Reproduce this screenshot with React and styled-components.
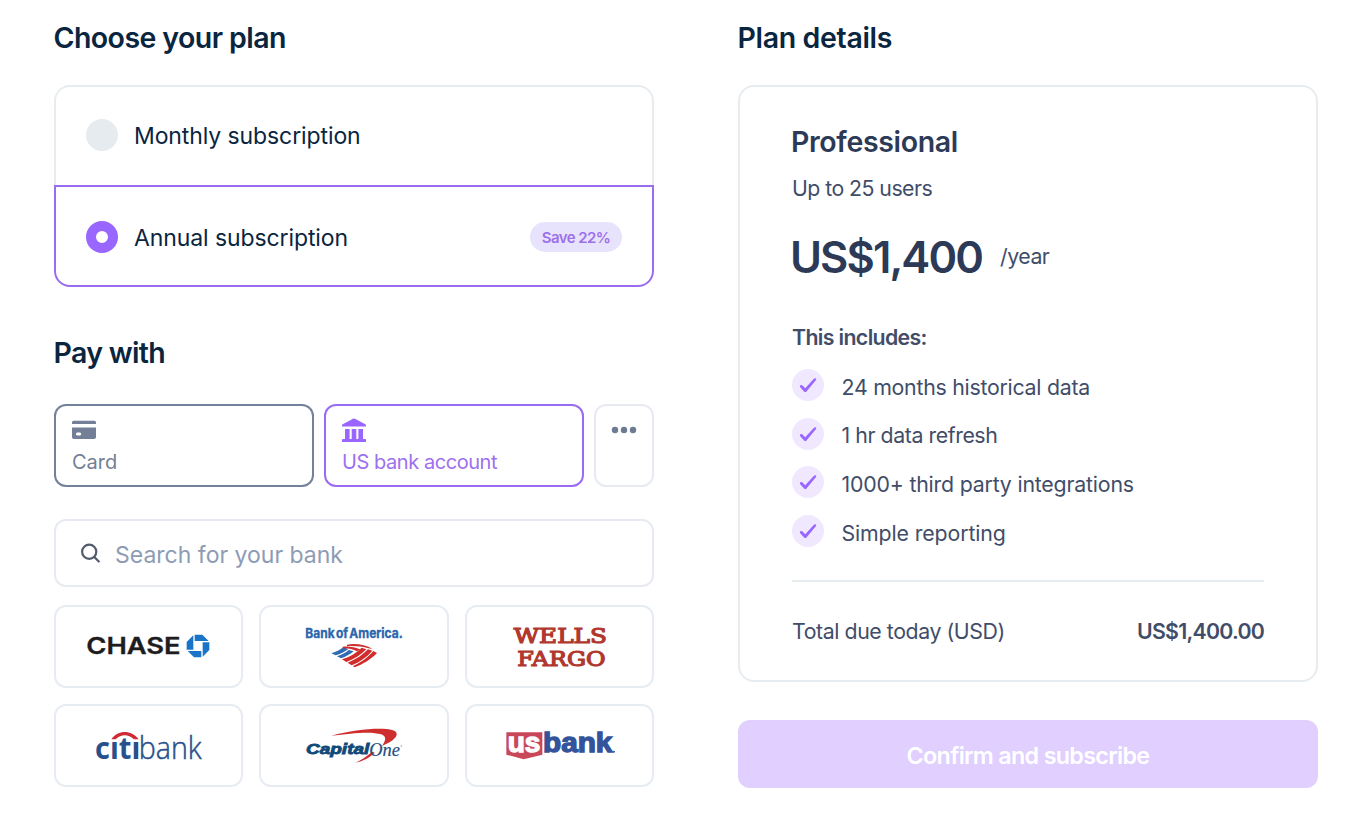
import React from "react";
import styled, { createGlobalStyle, css } from "styled-components";

const GlobalStyle = createGlobalStyle`
  *, *::before, *::after { box-sizing: border-box; }
  body {
    margin: 0;
    background: #fff;
    font-family: Inter, "Liberation Sans", sans-serif;
    font-weight: 400;
    color: #0a2540;
  }
  h1, h2, h3, p, ul { margin: 0; padding: 0; }
  svg { display: block; }
`;

const Page = styled.main`
  display: grid;
  grid-template-columns: 600px 580px;
  column-gap: 84px;
  align-items: start;
  padding: 20px 44px 39px 54px;
`;

const Column = styled.section`
  display: flex;
  flex-direction: column;
`;

const Heading = styled.h2`
  height: 36px;
  line-height: 36px;
  font-size: 28.5px;
  font-weight: 600;
  letter-spacing: ${(p) => p.$track || "-0.57px"};
  white-space: nowrap;
  margin: ${(p) => p.$top || 0}px 0 ${(p) => p.$bottom}px -0.5px;
`;

const PlanOption = styled.label`
  display: flex;
  align-items: center;
  padding: 0 30px;
  border: 2px solid #e7ecf0;
  ${(p) =>
    p.$selected
      ? css`
          height: 102px;
          padding-top: 2px;
          border-color: #9a6cf0;
          border-radius: 0 0 16px 16px;
        `
      : css`
          height: 100px;
          padding-bottom: 2px;
          border-bottom: 0;
          border-radius: 16px 16px 0 0;
        `}
`;

const Radio = styled.span`
  width: 32px;
  height: 32px;
  margin-right: 16px;
  border-radius: 50%;
  background: ${(p) => (p.$selected ? "#fff" : "#e6ebef")};
  border: ${(p) => (p.$selected ? "10px solid #9966ff" : "0")};
`;

const PlanName = styled.span`
  flex: 1;
  font-size: 23px;
  line-height: 30px;
  letter-spacing: ${(p) => p.$track || "-0.1px"};
  margin-top: 2px;
`;

const Badge = styled.span`
  width: 92px;
  height: 30px;
  line-height: 31px;
  border-radius: 15px;
  background: #e8e3fd;
  color: #9d70ea;
  font-size: 15px;
  font-weight: 600;
  letter-spacing: -0.55px;
  text-align: center;
`;

const Methods = styled.div`
  display: grid;
  grid-template-columns: 260px 260px 60px;
  column-gap: 10px;
`;

const tones = {
  grey: ["#74819a", "#727f96"],
  purple: ["#9a6cf4", "#9d70ee"],
  faint: ["#e7ebf1", "#6c7a92"],
};

const Method = styled.button`
  display: flex;
  flex-direction: column;
  align-items: ${(p) => (p.$tone === "faint" ? "center" : "flex-start")};
  height: 83px;
  padding: 12px 16px 0;
  background: #fff;
  border: 2px solid ${(p) => tones[p.$tone][0]};
  border-radius: 12px;
  color: ${(p) => tones[p.$tone][1]};
  font: 400 20px/24px Inter, sans-serif;
  letter-spacing: ${(p) => p.$track || "0"};
`;

const MethodLabel = styled.span`
  margin-top: 8px;
`;

const SearchBox = styled.div`
  display: flex;
  align-items: center;
  height: 68px;
  margin: 32px 0 18px;
  padding: 0 24px;
  border: 2px solid #e7ebf1;
  border-radius: 12px;
`;

const SearchInput = styled.span`
  margin: 3px 0 0 13px;
  font-size: 23px;
  line-height: 30px;
  color: #8d9bb4;
`;

const BankGrid = styled.div`
  display: grid;
  grid-template-columns: repeat(3, 1fr);
  gap: 16px;
`;

const BankTile = styled.button`
  height: 83px;
  padding: 0;
  background: #fff;
  border: 2px solid #e7ecf3;
  border-radius: 12px;
`;

const Logo = styled.svg`
  width: 100%;
  height: 79px;
`;

const Details = styled.article`
  height: 597px;
  padding: 37px 52px 0;
  border: 2px solid #e7ecf0;
  border-radius: 16px;
  color: #414d68;
`;

const PlanTitle = styled.h3`
  margin-left: -1px;
  font-size: 28.5px;
  line-height: 36px;
  font-weight: 600;
  letter-spacing: -0.35px;
  color: #2d3a57;
`;

const Line = styled.p`
  font-size: 21.3px;
  line-height: 28px;
  letter-spacing: ${(p) => p.$track};
  font-weight: ${(p) => (p.$strong ? 600 : 400)};
  margin-top: ${(p) => p.$top || 0}px;
  white-space: nowrap;
`;

const PriceRow = styled.div`
  display: flex;
  align-items: center;
  gap: 18px;
  margin-top: 29px;
`;

const Price = styled.strong`
  margin-left: -2px;
  font-size: 43.5px;
  line-height: 52px;
  font-weight: 600;
  letter-spacing: -1.9px;
  color: #2d3a57;
`;

const PricePeriod = styled(Line)`
  margin-bottom: 2px;
`;

const Features = styled.ul`
  display: flex;
  flex-direction: column;
  gap: 16.7px;
  margin-top: 18px;
  list-style: none;
`;

const Feature = styled.li`
  display: flex;
  align-items: center;
  gap: 17.5px;
  height: 32px;
`;

const Check = styled.span`
  display: grid;
  place-items: center;
  width: 32px;
  height: 32px;
  border-radius: 50%;
  background: #f0e8ff;
`;

const Total = styled.div`
  display: flex;
  justify-content: space-between;
  margin-top: 33px;
  padding-top: 35px;
  border-top: 2px solid #e6edf0;
`;

const Confirm = styled.button`
  height: 68px;
  margin-top: 38px;
  padding: 4px 0 0;
  border: 0;
  border-radius: 12px;
  background: #e0cfff;
  color: #fff;
  font: 600 23.3px/30px Inter, sans-serif;
  letter-spacing: -0.68px;
`;

const CardIcon = () => (
  <svg width="24" height="24" viewBox="0 0 24 24" fill="currentColor">
    <path d="M0 5.900V4.400C0 3.300.8 2.700 2 2.700h20c1.200 0 2 .6 2 1.700v1.500z" />
    <path fillRule="evenodd" d="M0 9.500h24v9.400c0 1.200-.8 2-2 2H2c-1.200 0-2-.8-2-2zM5.300 14.500c-1.700 0-1.700 3 0 3h2.600c1.700 0 1.700-3 0-3z" />
  </svg>
);

const BankIcon = () => (
  <svg width="24" height="24" viewBox="0 0 24 24" fill="#9966ff">
    <path d="M11 .7a2 2 0 0 1 2 0l10.300 5.500c.5.300.7.700.7 1.200v1.100H0V7.400c0-.5.200-.9.700-1.200z" />
    <path d="M3 11h4.600v10H3zM9.700 11h4.600v10H9.700zM16.400 11H21v10h-4.600z" />
    <path d="M1 20.900h22c.6 0 1 .4 1 1V24H0v-2.100c0-.6.400-1 1-1z" />
  </svg>
);

const DotsIcon = () => (
  <svg width="26" height="24" viewBox="-1 0 26 24" fill="currentColor">
    <circle cx="3" cy="12" r="3.200" />
    <circle cx="12" cy="12" r="3.200" />
    <circle cx="21" cy="12" r="3.200" />
  </svg>
);

const SearchIcon = () => (
  <svg width="22" height="22" viewBox="0 0 22 22" fill="none" stroke="#535b6e" strokeWidth="2.200">
    <circle cx="9.200" cy="9.800" r="7.100" />
    <path d="M14.300 14.900l4.500 4.600" strokeLinecap="round" />
  </svg>
);

const CheckIcon = () => (
  <svg width="18" height="16" viewBox="0 0 18 16" fill="#9966ff">
    <path d="M1.400 8.300c.8-.5 1.800-.2 2.400.500l2.400 2.500L14.700 2c.6-.6 1.600-.9 2.200-.3.500.4.300 1-.1 1.500L7.500 14.500c-.7.800-1.700.8-2.400 0L1.400 10.400c-.6-.700-.6-1.600 0-2.100z" />
  </svg>
);

const sans = 'Inter, "Liberation Sans", sans-serif';

const ChaseLogo = () => (
  <Logo viewBox="18 21 556 237">
    <text x="109" y="163" textLength="283" lengthAdjust="spacingAndGlyphs" fontFamily={sans} fontWeight="600" fontSize="70" fill="#1d1d1f" stroke="#1d1d1f" strokeWidth="1">CHASE</text>
    <g fill="#1a74c8">
      <path d="M434 104h23l19 19h-42z" />
      <path d="M478 127v23l-20 20v-43z" />
      <path d="M454 172h-22l-19-19h41z" />
      <path d="M410 149v-23l20-20v43z" />
    </g>
  </Logo>
);

const BofaLogo = () => (
  <Logo viewBox="19 21 556 237">
    <text x="152" y="113" textLength="292" lengthAdjust="spacingAndGlyphs" fontFamily={sans} fontWeight="700" fontSize="40" wordSpacing="-5" fill="#2a66ad" stroke="#2a66ad" strokeWidth="1">Bank of America.</text>
    <g fill="#2f6cb4">
      <path d="M230 160C245 156 256 150 266 142L281 147C270 156 257 162 243 166Z" />
      <path d="M247 169C262 164 273 158 282 150L297 154C286 164 273 170 259 175Z" />
    </g>
    <g fill="#d02c2c">
      <path d="M262 178C287 170 306 158 321 143L335 148C318 165 299 178 275 186Z" />
      <path d="M279 188C305 178 325 164 340 148L353 152C336 172 315 186 291 196Z" />
      <path d="M295 198C322 186 341 171 356 153L367 159C348 179 325 192 300 202Z" />
      <path d="M264 140C283 138 302 142 317 148L307 154C294 148 280 144 264 145Z" />
      <path d="M277 134C302 129 332 134 354 147L342 145C322 140 300 137 277 139Z" />
    </g>
  </Logo>
);

const WellsLogo = () => (
  <Logo viewBox="20 21 556 237">
    <g fontFamily='"DejaVu Serif", serif' fontWeight="400" fontSize="61" fill="#b0382e" stroke="#b0382e" strokeWidth="3.500">
      <text x="160" y="129" textLength="280" lengthAdjust="spacingAndGlyphs">WELLS</text>
      <text x="171" y="199" textLength="265" lengthAdjust="spacingAndGlyphs">FARGO</text>
    </g>
  </Logo>
);

const CitiLogo = () => (
  <Logo viewBox="18 318 556 237">
    <g fontFamily='"Open Sans", sans-serif' fill="#28518c">
      <text x="135" y="477" textLength="136" lengthAdjust="spacingAndGlyphs" fontWeight="700" fontSize="90">citi</text>
      <text x="266" y="477" textLength="189" lengthAdjust="spacingAndGlyphs" fontWeight="300" fontSize="91" stroke="#28518c" strokeWidth="1.500">bank</text>
    </g>
    <path d="M180 398h33v27h-33zM240 398h29v27h-29z" fill="#fff" />
    <path d="M184 418C205 389 243 389 266 418L252 418C234 402 214 402 197 418Z" fill="#cf2b36" />
  </Logo>
);

const CapitalLogo = () => (
  <Logo viewBox="19 318 556 237">
    <path d="M230 407C290 391 350 384 395 387C428 389 432 402 420 415C412 424 396 432 382 438C393 422 397 410 380 403C350 393 290 400 230 407Z" fill="#cf2e2e" />
    <path d="M352 455C337 469 320 480 303 488C325 483 347 472 360 458Z" fill="#cf2e2e" />
    <text x="154" y="462" textLength="190" lengthAdjust="spacingAndGlyphs" fontFamily='"Liberation Sans", sans-serif' fontStyle="italic" fontWeight="700" fontSize="45" fill="#0f4978" stroke="#0f4978" strokeWidth="2.500">Capital</text>
    <text x="344" y="468" textLength="92" lengthAdjust="spacingAndGlyphs" fontFamily='"Liberation Serif", serif' fontStyle="italic" fontSize="57" fill="#1f5083" stroke="#1f5083" strokeWidth=".6">One</text>
    <circle cx="440" cy="438" r="2" fill="#8296b0" />
  </Logo>
);

const UsBankLogo = () => (
  <Logo viewBox="20 318 556 237">
    <path d="M138 397h108v67l-56 14-52-14z" fill="#c8485a" />
    <g fontFamily='"Liberation Sans", sans-serif' fontWeight="700" strokeWidth="4">
      <text x="142" y="456" textLength="98" lengthAdjust="spacingAndGlyphs" fontSize="83" fill="#fff" stroke="#fff">us</text>
      <text x="248" y="457" textLength="208" lengthAdjust="spacingAndGlyphs" fontSize="81" fill="#33539b" stroke="#33539b">bank</text>
    </g>
    <circle cx="461" cy="455" r="3" fill="#33539b" />
  </Logo>
);

const banks = [ChaseLogo, BofaLogo, WellsLogo, CitiLogo, CapitalLogo, UsBankLogo];

const features = [
  ["24 months historical data", "-0.25px"],
  ["1 hr data refresh", "-0.43px"],
  ["1000+ third party integrations", "-0.19px"],
  ["Simple reporting", "-0.12px"],
];

export default function App() {
  return (
    <>
      <GlobalStyle />
      <Page>
        <Column>
          <Heading $bottom={29}>Choose your plan</Heading>
          <PlanOption>
            <Radio />
            <PlanName>Monthly subscription</PlanName>
          </PlanOption>
          <PlanOption $selected>
            <Radio $selected />
            <PlanName $track="-0.1px">Annual subscription</PlanName>
            <Badge>Save 22%</Badge>
          </PlanOption>

          <Heading $top={48} $bottom={33} $track="-0.67px">Pay with</Heading>
          <Methods>
            <Method $tone="grey">
              <CardIcon />
              <MethodLabel>Card</MethodLabel>
            </Method>
            <Method $tone="purple" $track="-0.44px">
              <BankIcon />
              <MethodLabel>US bank account</MethodLabel>
            </Method>
            <Method $tone="faint" aria-label="More payment methods">
              <DotsIcon />
            </Method>
          </Methods>

          <SearchBox>
            <SearchIcon />
            <SearchInput>Search for your bank</SearchInput>
          </SearchBox>

          <BankGrid>
            {banks.map((BankLogo, i) => (
              <BankTile key={i}>
                <BankLogo />
              </BankTile>
            ))}
          </BankGrid>
        </Column>

        <Column>
          <Heading $bottom={29} $track="-0.34px">Plan details</Heading>
          <Details>
            <PlanTitle>Professional</PlanTitle>
            <Line $top={14} $track="-0.55px">Up to 25 users</Line>
            <PriceRow>
              <Price>US$1,400</Price>
              <PricePeriod $track="-0.5px">/year</PricePeriod>
            </PriceRow>
            <Line $strong $top={40} $track="-0.64px">This includes:</Line>
            <Features>
              {features.map(([label, track]) => (
                <Feature key={label}>
                  <Check>
                    <CheckIcon />
                  </Check>
                  <Line $top={3} $track={track}>{label}</Line>
                </Feature>
              ))}
            </Features>
            <Total>
              <Line $track="-0.42px">Total due today (USD)</Line>
              <Line $strong $track="-0.75px">US$1,400.00</Line>
            </Total>
          </Details>
          <Confirm>Confirm and subscribe</Confirm>
        </Column>
      </Page>
    </>
  );
}
